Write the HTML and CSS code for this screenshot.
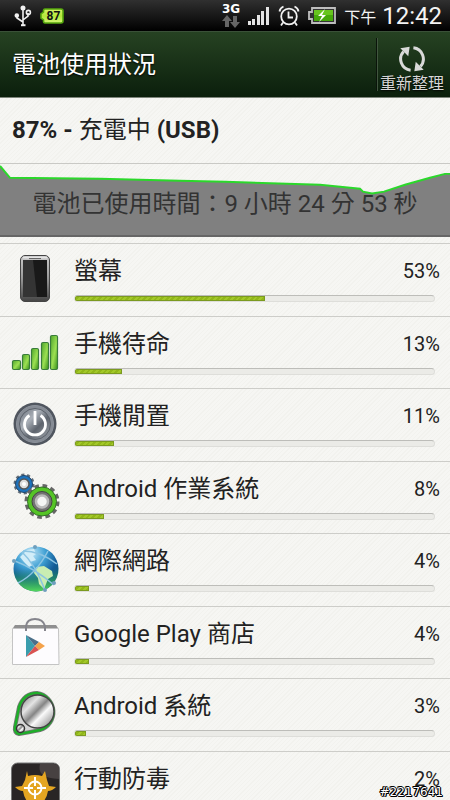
FILE: index.html
```html
<!DOCTYPE html>
<html lang="zh-Hant">
<head>
<meta charset="utf-8">
<meta name="viewport" content="width=device-width, initial-scale=1">
<title>電池使用狀況</title>
<link rel="stylesheet" href="styles.css">
</head>
<body>
<div class="screen">
  <div class="status">
    <div class="status-side">
      <svg width="18" height="22" viewBox="0 0 18 22" fill="none" stroke="#f2f2f2" stroke-width="1.6">
        <path d="M9 3v17M9 17l-6-4V9M9 15l5-4V8"/>
        <circle cx="9" cy="3" r="1.7" fill="#f2f2f2"/><circle cx="2.8" cy="10.5" r="1.5" fill="#f2f2f2"/><circle cx="14.4" cy="7.4" r="2"/>
        <path d="M7 20.200h4.500" stroke-width="2"/>
      </svg>
      <span class="level"><svg width="24" height="16" viewBox="0 0 24 16"><defs><linearGradient id="lv" x2="0" y2="1"><stop offset="0" stop-color="#d8f26a"/><stop offset=".5" stop-color="#b4e83a"/><stop offset="1" stop-color="#d2f578"/></linearGradient></defs><path d="M5 1h16q2 0 2 2v10q0 2-2 2H5q-1.500 0-1.500-2v-1L1 10V6l2.500-2V3Q3.500 1 5 1z" fill="url(#lv)" stroke="#56a80c" stroke-width="1.600"/></svg><b>87</b></span>
    </div>
    <div class="status-side status-right">
      <span class="net"><b>3G</b>
        <svg width="18" height="13" viewBox="0 0 18 13" fill="#666"><path d="M5 0l5 6H7v6H3V6H0zM11 1h4v6h3l-5 6-5-6h3z"/></svg>
      </span>
      <svg class="signal" width="22" height="19" viewBox="0 0 22 19" fill="#e4e4e4"><path d="M0 15h3v4H0zM4 13h3v6H4zM9 9h3v10H9zM13 5h3v14h-3zM18 1h3v18h-3z"/></svg>
      <svg width="22" height="22" viewBox="0 0 22 22" fill="none" stroke="#f0f0f0" stroke-width="1.800"><circle cx="11" cy="11.500" r="7.800"/><path d="M10.500 6.500v6h4.500M1.500 6.500Q2 3 5.500 1.500M20.500 6.500Q20 3 16.500 1.500M5 17.500l-2 3M17 17.500l2 3"/></svg>
      <svg width="28" height="17" viewBox="0 0 28 17"><path d="M4 1h23v15H4v-4H1V5h3z" fill="#333" stroke="#bdbdbd" stroke-width="1.800"/><path d="M6 3h19v11H6z" fill="#45a80b"/><path d="M6 3h19v5H6z" fill="#67c51e"/><path d="M17 2l-7 7h4l-3 6 7-7h-4z" fill="#fff"/></svg>
      <span class="ampm">下午</span><span class="clock">12:42</span>
    </div>
  </div>

  <header class="bar">
    <h1>電池使用狀況</h1>
    <button class="refresh" type="button">
      <svg width="28" height="28" viewBox="0 0 30 30" fill="none" stroke="#d9d9d9" stroke-width="3.200"><path d="M13.500 27A12 12 0 0 1 6 7M16.500 3A12 12 0 0 1 24 23"/><path d="M2.500 3.500L12.500 2 11 12zM27.500 26.500L17.500 28 19 18z" fill="#d9d9d9" stroke="none"/></svg>
      <span>重新整理</span>
    </button>
  </header>

  <main>
    <p class="summary">87% - <span>充電中</span> (USB)</p>
    <div class="chart">
      <svg viewBox="0 0 450 72" preserveAspectRatio="none"><path d="M0 2L10 14 100 15 180 17 225 18 320 21 360 25 363 28 372 30 384 28 405 21 430 14 445 10 450 10V72H0z" fill="#808080"/><path d="M0 2L10 14 100 15 180 17 225 18 320 21 360 25 363 28 372 30 384 28 405 21 430 14 445 10 450 10" fill="none" stroke="#2bd82b" stroke-width="2"/></svg>
      <p>電池已使用時間：9 小時 24 分 53 秒</p>
    </div>

    <ul class="usage">
      <li>
        <svg class="icon" viewBox="0 0 50 50"><defs><linearGradient id="ph" x2="0" y2="1"><stop offset="0" stop-color="#ccc"/><stop offset=".5" stop-color="#999"/><stop offset="1" stop-color="#444"/></linearGradient></defs><rect x="10.500" y="1.500" width="29" height="46" rx="4.500" fill="url(#ph)" stroke="#444"/><path d="M13 3.500h24" stroke="#e5e5e5" stroke-width="1.500"/><path d="M19 4.500h12" stroke="#666"/><rect x="13" y="6" width="24" height="37" fill="#191919"/><path d="M13 6h10l4 37H13z" fill="#343434"/></svg>
        <div class="info"><div class="line"><span class="name">螢幕</span><span class="pct">53%</span></div><div class="track"><div class="fill" style="width:53%"></div></div></div>
      </li>
      <li>
        <svg class="icon" viewBox="0 0 50 50"><defs><linearGradient id="gb" x2="1" y2="1"><stop offset="0" stop-color="#4fa52c"/><stop offset=".55" stop-color="#9be052"/><stop offset="1" stop-color="#358d18"/></linearGradient></defs><g fill="url(#gb)" stroke="#397c3b" stroke-width="1.200"><rect x="2.500" y="33.500" width="8" height="9" rx="1.500"/><rect x="12.500" y="27.500" width="7" height="15" rx="1.500"/><rect x="21.500" y="21.500" width="7" height="21" rx="1.500"/><rect x="31.500" y="15.500" width="7" height="27" rx="1.500"/><rect x="40.500" y="8.500" width="7" height="34" rx="1.500"/></g></svg>
        <div class="info"><div class="line"><span class="name">手機待命</span><span class="pct">13%</span></div><div class="track"><div class="fill" style="width:13%"></div></div></div>
      </li>
      <li>
        <svg class="icon" viewBox="0 0 50 50"><defs><linearGradient id="pw" x2="1" y2="1"><stop offset="0" stop-color="#6a717b"/><stop offset=".35" stop-color="#aab0b8"/><stop offset=".6" stop-color="#5e646d"/><stop offset="1" stop-color="#a6abb2"/></linearGradient></defs><circle cx="25" cy="25" r="21.500" fill="#50565f"/><circle cx="25" cy="25" r="18.500" fill="#858b94" stroke="#8d939c"/><circle cx="25" cy="25" r="15.500" fill="url(#pw)" stroke="#5b616a"/><path d="M19.500 16.500a10.500 10.500 0 1 0 11 0M25 12v14" fill="none" stroke="#fff" stroke-width="2.800"/></svg>
        <div class="info"><div class="line"><span class="name">手機閒置</span><span class="pct">11%</span></div><div class="track"><div class="fill" style="width:11%"></div></div></div>
      </li>
      <li>
        <svg class="icon" viewBox="0 0 50 50"><circle cx="14" cy="12" r="9" fill="none" stroke="#626d78" stroke-width="3" stroke-dasharray="3 2.650"/><circle cx="14" cy="12" r="8.500" fill="#1d73bd" stroke="#22466a"/><circle cx="14" cy="12" r="5" fill="#ddd" stroke="#555" stroke-width="1.500"/><circle cx="14" cy="12" r="2" fill="#fff"/><circle cx="32" cy="29.500" r="15.500" fill="none" stroke="#666" stroke-width="4" stroke-dasharray="4.500 3.620"/><circle cx="32" cy="29.500" r="14.500" fill="#55c426" stroke="#34702a"/><circle cx="32" cy="29.500" r="10" fill="#737373" stroke="#444"/><circle cx="32" cy="29.500" r="6" fill="#f5f5f5" stroke="#bbb" stroke-width="2.500"/></svg>
        <div class="info"><div class="line"><span class="name">Android 作業系統</span><span class="pct">8%</span></div><div class="track"><div class="fill" style="width:8%"></div></div></div>
      </li>
      <li>
        <svg class="icon" viewBox="0 0 50 50"><defs><radialGradient id="gl" cx=".38" cy=".15" r=".85"><stop offset="0" stop-color="#c6eafa"/><stop offset=".4" stop-color="#3c9ed2"/><stop offset=".7" stop-color="#135b98"/><stop offset="1" stop-color="#0c5b70"/></radialGradient><linearGradient id="gn" x2="0" y2="1"><stop offset=".5" stop-color="#23a04a" stop-opacity="0"/><stop offset="1" stop-color="#55d95e"/></linearGradient></defs><circle cx="26" cy="25" r="22.500" fill="url(#gl)"/><circle cx="26" cy="25" r="22.500" fill="url(#gn)"/><path d="M10 13l7-7 7-1 2 5-3 2 3 4-6 2 3 3-4 2-5-5z" fill="#d2edf8"/><path d="M26 23l8-1 8 5 1 5-5 3-4 10-5-5-1-6-4-5z" fill="#c9edb2"/><g fill="none" stroke="#8cc4e2" stroke-width="1.500"><path d="M5 17Q24 24 44 41M12 8Q25 20 35 46M8 39Q26 30 38 7M13 7Q30 7 47 20"/></g><g fill="#6f9fbd"><circle cx="25" cy="3" r="2"/><circle cx="44" cy="39" r="2"/><circle cx="35" cy="46" r="2"/><circle cx="4" cy="17" r="2"/></g></svg>
        <div class="info"><div class="line"><span class="name">網際網路</span><span class="pct">4%</span></div><div class="track"><div class="fill" style="width:4%"></div></div></div>
      </li>
      <li>
        <svg class="icon" viewBox="0 0 50 50"><path d="M2.500 11.500h46l.5 36H2.500z" fill="#fdfcfe" stroke="#c4c4c4"/><path d="M3 11h45l-2-3H5z" fill="#8f8f8f"/><path d="M16 14V9Q17 2 25 2t10 7v5" fill="none" stroke="#85858c" stroke-width="2"/><path d="M16 18v22l9-11z" fill="#3a9dad"/><path d="M16 18l13 7-4 4z" fill="#4b6f89"/><path d="M29 25l6 4-6 4-4-4z" fill="#f4a24b"/><path d="M16 40l13-7-4-4z" fill="#d95352"/></svg>
        <div class="info"><div class="line"><span class="name">Google Play 商店</span><span class="pct">4%</span></div><div class="track"><div class="fill" style="width:4%"></div></div></div>
      </li>
      <li>
        <svg class="icon" viewBox="0 0 50 50"><defs><linearGradient id="dk" x2="1" y2="1"><stop offset="0" stop-color="#777"/><stop offset=".3" stop-color="#e4e4e4"/><stop offset=".48" stop-color="#858585"/><stop offset=".62" stop-color="#fafafa"/><stop offset="1" stop-color="#777"/></linearGradient></defs><path d="M9 18Q14 4 27 4a19 19 0 0 1 3 37Q21 43 9 45Q4 44 5 38z" fill="#d4d4d4" stroke="#777" stroke-width="4"/><path d="M9 18Q14 4 27 4a19 19 0 0 1 3 37Q21 43 9 45Q4 44 5 38z" fill="none" stroke="#1eae29" stroke-width="2.500"/><circle cx="27.500" cy="22.500" r="16.500" fill="url(#dk)" stroke="#444" stroke-width="1.500"/><circle cx="10.500" cy="39.500" r="4" fill="url(#dk)" stroke="#333" stroke-width="1.500"/></svg>
        <div class="info"><div class="line"><span class="name">Android 系統</span><span class="pct">3%</span></div><div class="track"><div class="fill" style="width:3%"></div></div></div>
      </li>
      <li>
        <svg class="icon" viewBox="0 0 50 50"><rect x="1.500" y="1" width="48" height="48" rx="6" fill="#292525" stroke="#777"/><path d="M30 2q-4 14 19 15V6q-1-4-5-4z" fill="#474141"/><path d="M17 9l1 5q7-2 14 0l3-5 2 9 2 6 7 1q-4 4-8 4-2 13-13 14-10-1-12-14-4 0-8-4l7-1 3-6z" fill="#e4a521"/><g fill="none" stroke="#fff" stroke-width="2"><circle cx="25" cy="26" r="6.500"/><path d="M25 15v9M25 28v9M14 26h9M27 26h9"/></g></svg>
        <div class="info"><div class="line"><span class="name">行動防毒</span><span class="pct">2%</span></div><div class="track"><div class="fill" style="width:2%"></div></div></div>
      </li>
    </ul>
  </main>
  <span class="stamp">#2217641</span>
</div>
</body>
</html>
```
FILE: styles.css
```css
* { box-sizing: border-box; }

body {
  margin: 0;
  background: #f4f4f0;
  color: #222;
  font-family: Roboto, "Noto Sans CJK TC", sans-serif;
}

h1, p, ul { margin: 0; padding: 0; font-weight: 400; }
svg { display: block; flex: none; }

.screen {
  position: relative;
  height: 100vh;
  overflow: hidden;
  background: repeating-linear-gradient(135deg, #f6f6f3 0 2px, #f2f2ee 2px 3px);
}

.status {
  display: flex;
  justify-content: space-between;
  height: 31px;
  padding: 0 8px 0 14px;
  background: linear-gradient(#303030, #000);
  color: #f4f4f4;
}

.status-side { display: flex; align-items: center; gap: 8px; }
.level { position: relative; }
.level b {
  position: absolute;
  inset: 0 0 0 3px;
  color: #111;
  font-size: 12px;
  line-height: 16px;
  text-align: center;
}

.net { display: flex; flex-direction: column; align-items: center; color: #fff; }
.net b { font: 700 12px/12px "DejaVu Sans", sans-serif; }
.ampm { font-size: 16px; }
.clock { font-size: 24px; line-height: 30px; margin-left: -2px; }

.bar {
  display: flex;
  justify-content: space-between;
  align-items: center;
  height: 67px;
  padding-left: 12px;
  border-top: 1px solid #3a5138;
  border-bottom: 1px solid #7d857b;
  background: linear-gradient(#264222, #0b1f0c);
  color: #fff;
  text-shadow: 0 1px 2px #000;
}
.bar h1 { font-size: 24px; line-height: 36px; }

.refresh {
  display: flex;
  flex-direction: column;
  align-items: center;
  justify-content: flex-end;
  height: 53px;
  padding: 0 6px 0 3px;
  border: 0;
  border-left: 1px solid #0a140a;
  box-shadow: inset 1px 0 #41563f;
  background: none;
  color: #d6d6d6;
  font: inherit;
  font-size: 16px;
  line-height: 22px;
  text-shadow: inherit;
}
.refresh span { margin-bottom: -4px; }

.summary {
  height: 66px;
  padding-left: 12px;
  border-bottom: 1px solid #c9c9c5;
  font-size: 24px;
  font-weight: 700;
  line-height: 64px;
}
.summary span { font-weight: 400; }

.chart {
  display: grid;
  height: 73px;
  border-bottom: 2px solid #666;
}
.chart > * { grid-area: 1 / 1; }
.chart svg { width: 100%; height: 71px; }
.chart p {
  z-index: 1;
  padding-top: 22px;
  color: #333;
  font-size: 24px;
  line-height: 36px;
  text-align: center;
}

.usage { margin-top: 6px; list-style: none; }
.usage li {
  display: flex;
  gap: 14px;
  height: 73px;
  padding: 10px 10px 0;
  border-top: 1px solid #cdcdc9;
}
.usage li:nth-child(even) { height: 72px; }
.icon { width: 50px; height: 50px; }
.info { flex: 1; }
.line { display: flex; justify-content: space-between; align-items: center; height: 34px; }
.name { font-size: 24px; line-height: 34px; }
.pct { font-size: 20px; }

.track {
  height: 7px;
  margin: 7px 5px 0 0;
  overflow: hidden;
  border: 1px solid #dededa;
  border-top-color: #bdbdb9;
  border-radius: 4px;
  background: #ebebe7;
}
.fill {
  height: 100%;
  background: repeating-linear-gradient(135deg, #a2c828 0 2px, #91b61a 2px 4px);
  box-shadow: inset 0 0 0 1px #7b9a20;
}

.stamp {
  position: absolute;
  right: 7px;
  bottom: 0;
  color: #fff;
  font: 12px/15px "DejaVu Sans", sans-serif;
  text-shadow: 1px 0 #000, -1px 0 #000, 0 1px #000, 0 -1px #000, 1px 1px #000, -1px -1px #000;
}
```
